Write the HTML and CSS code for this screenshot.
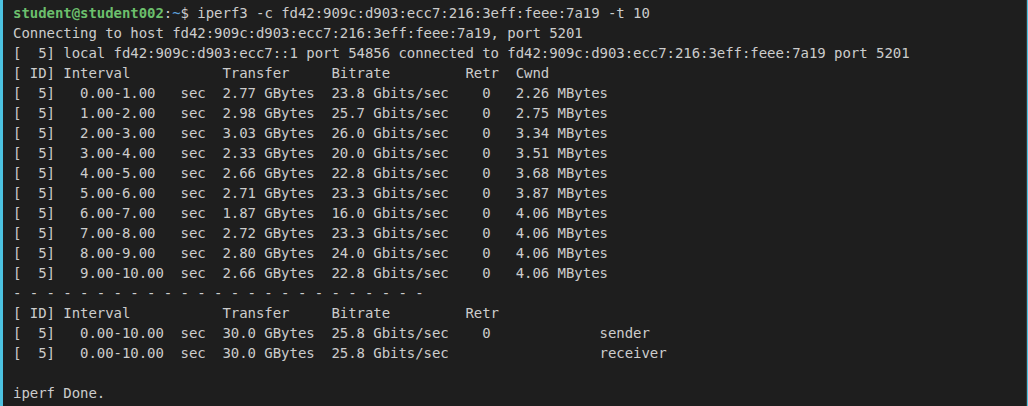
FILE: index.html
```html
<!DOCTYPE html>
<html>
<head>
<meta charset="utf-8">
<link rel="stylesheet" href="styles.css">
</head>
<body>
<div class="term">
<pre class="out"><span class="user">student@student002</span><span class="colon">:</span><span class="path">~</span>$ iperf3 -c fd42:909c:d903:ecc7:216:3eff:feee:7a19 -t 10
Connecting to host fd42:909c:d903:ecc7:216:3eff:feee:7a19, port 5201
[  5] local fd42:909c:d903:ecc7::1 port 54856 connected to fd42:909c:d903:ecc7:216:3eff:feee:7a19 port 5201
[ ID] Interval           Transfer     Bitrate         Retr  Cwnd
[  5]   0.00-1.00   sec  2.77 GBytes  23.8 Gbits/sec    0   2.26 MBytes
[  5]   1.00-2.00   sec  2.98 GBytes  25.7 Gbits/sec    0   2.75 MBytes
[  5]   2.00-3.00   sec  3.03 GBytes  26.0 Gbits/sec    0   3.34 MBytes
[  5]   3.00-4.00   sec  2.33 GBytes  20.0 Gbits/sec    0   3.51 MBytes
[  5]   4.00-5.00   sec  2.66 GBytes  22.8 Gbits/sec    0   3.68 MBytes
[  5]   5.00-6.00   sec  2.71 GBytes  23.3 Gbits/sec    0   3.87 MBytes
[  5]   6.00-7.00   sec  1.87 GBytes  16.0 Gbits/sec    0   4.06 MBytes
[  5]   7.00-8.00   sec  2.72 GBytes  23.3 Gbits/sec    0   4.06 MBytes
[  5]   8.00-9.00   sec  2.80 GBytes  24.0 Gbits/sec    0   4.06 MBytes
[  5]   9.00-10.00  sec  2.66 GBytes  22.8 Gbits/sec    0   4.06 MBytes
- - - - - - - - - - - - - - - - - - - - - - - - -
[ ID] Interval           Transfer     Bitrate         Retr
[  5]   0.00-10.00  sec  30.0 GBytes  25.8 Gbits/sec    0             sender
[  5]   0.00-10.00  sec  30.0 GBytes  25.8 Gbits/sec                  receiver

iperf Done.</pre>
</div>
</body>
</html>
```
FILE: styles.css
```css
html, body {
  margin: 0;
  padding: 0;
  background: #1e1e1e;
}
.term {
  height: 406px;
  box-sizing: border-box;
  background: #1e1e1e;
  border-left: 3px solid #4cc2e0;
  border-right: 1px solid #4cc2e0;
  box-shadow: inset -1px 0 0 #3a3a3a;
  overflow: hidden;
  padding: 3px 0 0 10px;
}
.out {
  margin: 0;
  font-family: "DejaVu Sans Mono", monospace;
  font-size: 14px;
  letter-spacing: -0.05px;
  line-height: 20px;
  color: #cccccc;
  white-space: pre;
}
.user {
  color: #6cbf6c;
  font-weight: bold;
}
.colon {
  color: #cccccc;
}
.path {
  color: #5c9fd8;
}
```
